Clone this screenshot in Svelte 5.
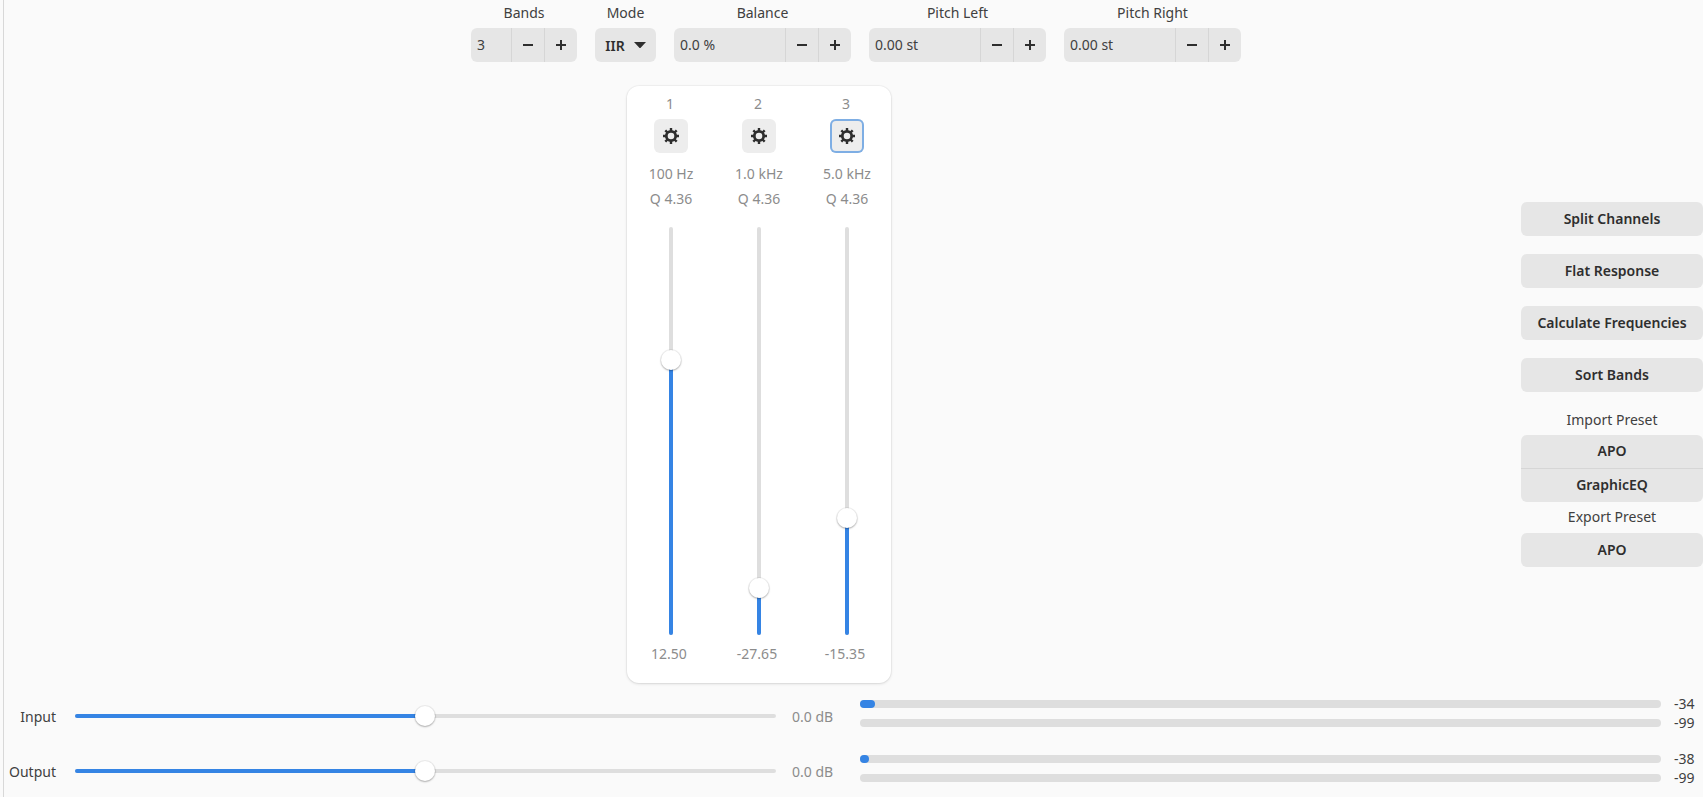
<script>
  const bands = [
    { n: '1', f: '100 Hz', q: 'Q 4.36', v: 12.5, t: '12.50' },
    { n: '2', f: '1.0 kHz', q: 'Q 4.36', v: -27.65, t: '-27.65' },
    { n: '3', f: '5.0 kHz', q: 'Q 4.36', v: -15.35, t: '-15.35', focus: true }
  ];
  const spins = [
    { label: 'Bands', value: '3', w: 40 },
    { label: 'Balance', value: '0.0 %', w: 111 },
    { label: 'Pitch Left', value: '0.00 st', w: 111 },
    { label: 'Pitch Right', value: '0.00 st', w: 111 }
  ];
  const gains = [
    { label: 'Input', levels: [{ w: 15, t: '-34' }, { w: 0, t: '-99' }] },
    { label: 'Output', levels: [{ w: 9, t: '-38' }, { w: 0, t: '-99' }] }
  ];
  const pct = (v) => ((v + 36) / 72) * 100;
</script>

{#snippet spin(s)}
  <div class="field">
    <div class="cap">{s.label}</div>
    <div class="spin">
      <div class="val" style="width:{s.w}px">{s.value}</div>
      <div class="step">
        <svg width="12" height="12" viewBox="0 0 12 12"><rect x="1" y="5" width="10" height="2" fill="#2e2e2e" /></svg>
      </div>
      <div class="step">
        <svg width="12" height="12" viewBox="0 0 12 12"><path d="M5 1h2v4h4v2H7v4H5V7H1V5h4z" fill="#2e2e2e" /></svg>
      </div>
    </div>
  </div>
{/snippet}

<div class="app">
  <div class="upper">
    <div class="center">
      <div class="controls">
        {@render spin(spins[0])}
        <div class="field">
          <div class="cap">Mode</div>
          <div class="combo">
            <span>IIR</span>
            <svg width="12" height="8" viewBox="0 0 12 8"><path d="M0 1h12L6.9 6.600a1.2 1.2 0 0 1-1.8 0z" fill="#2e2e2e" /></svg>
          </div>
        </div>
        {@render spin(spins[1])}
        {@render spin(spins[2])}
        {@render spin(spins[3])}
      </div>
      <div class="card">
        {#each bands as b}
          <div class="band">
            <div class="num">{b.n}</div>
            <div class="gear" class:focus={b.focus}>
              <svg width="18" height="18" viewBox="0 0 18 18">
                <circle cx="9" cy="9" r="4.7" fill="none" stroke="#2e2e2e" stroke-width="2.8" />
                <g stroke="#2e2e2e" stroke-width="2.4" stroke-linecap="butt">
                  <path d="M9 1v3M9 14v3M1 9h3M14 9h3M3.3 3.3l2.2 2.2M12.5 12.5l2.2 2.2M3.3 14.7l2.2-2.2M12.5 5.500l2.2-2.2" />
                </g>
              </svg>
            </div>
            <div class="dim freq">{b.f}</div>
            <div class="dim q">{b.q}</div>
            <div class="vtrack">
              <div class="vfill" style="height:{pct(b.v)}%"></div>
              <div class="thumb vthumb" style="bottom:{pct(b.v)}%"></div>
            </div>
            <div class="dim out">{b.t}</div>
          </div>
        {/each}
      </div>
    </div>
    <div class="side">
      <button class="btn">Split Channels</button>
      <button class="btn">Flat Response</button>
      <button class="btn">Calculate Frequencies</button>
      <button class="btn">Sort Bands</button>
      <div class="sidecap first">Import Preset</div>
      <div class="linked">
        <button class="btn">APO</button>
        <button class="btn">GraphicEQ</button>
      </div>
      <div class="sidecap">Export Preset</div>
      <button class="btn">APO</button>
    </div>
  </div>
  <div class="lower">
    {#each gains as g}
      <div class="gain">
        <div class="glabel">{g.label}</div>
        <div class="htrack">
          <div class="hfill"></div>
          <div class="thumb hthumb"></div>
        </div>
        <div class="dim db">0.0 dB</div>
        <div class="meters">
          {#each g.levels as l}
            <div class="meter">
              <div class="bar">
                {#if l.w}<div class="barfill" style="width:{l.w}px"></div>{/if}
              </div>
              <div class="lvl">{l.t}</div>
            </div>
          {/each}
        </div>
      </div>
    {/each}
  </div>
</div>

<style>
  :global(body) {
    margin: 0;
    background: #fafafa;
  }
  .app {
    height: 797px;
    box-sizing: border-box;
    border-left: 1px solid #d8d8d8;
    margin-left: 3px;
    width: 1700px;
    display: flex;
    flex-direction: column;
    font-family: 'Noto Sans', sans-serif;
    font-size: 14px;
    color: #2e2e2e;
    overflow: hidden;
  }
  .upper {
    flex: none;
    height: 688px;
    display: flex;
  }
  .center {
    flex: 1;
    display: flex;
    flex-direction: column;
  }
  .controls {
    display: flex;
    gap: 18px;
    padding-left: 467px;
    height: 86px;
  }
  .field {
    display: flex;
    flex-direction: column;
    align-items: center;
  }
  .cap {
    height: 28px;
    line-height: 25px;
    color: #404040;
  }
  .spin {
    display: flex;
    height: 34px;
    background: #e6e6e6;
    border-radius: 6px;
    line-height: 34px;
  }
  .val {
    padding-left: 6px;
    box-sizing: border-box;
    color: #404040;
  }
  .step {
    width: 32px;
    border-left: 1px solid #d6d6d6;
    display: flex;
    align-items: center;
    justify-content: center;
  }
  .combo {
    width: 61px;
    height: 34px;
    box-sizing: border-box;
    background: #e6e6e6;
    border-radius: 6px;
    display: flex;
    align-items: center;
    justify-content: center;
    gap: 9px;
    font-weight: 600;
  }
  .card {
    margin-left: 623px;
    width: 264px;
    height: 597px;
    box-sizing: border-box;
    background: #fff;
    border-radius: 12px;
    box-shadow: 0 0 0 1px rgba(0, 0, 0, 0.03), 0 1px 3px rgba(0, 0, 0, 0.12);
    display: flex;
  }
  .band {
    width: 88px;
    display: flex;
    flex-direction: column;
    align-items: center;
    position: relative;
  }
  .num {
    margin-top: 8px;
    margin-right: 2px;
    height: 25px;
    line-height: 20px;
    color: #8c8c8c;
  }
  .gear {
    width: 34px;
    height: 34px;
    box-sizing: border-box;
    border-radius: 6px;
    background: #ededed;
    display: flex;
    align-items: center;
    justify-content: center;
  }
  .gear.focus {
    box-shadow: inset 0 0 0 2px #7eaee4;
  }
  .dim {
    color: #8c8c8c;
  }
  .freq {
    margin-top: 11px;
    height: 25px;
    line-height: 20px;
  }
  .q {
    height: 38px;
    line-height: 20px;
  }
  .vtrack {
    position: relative;
    width: 4px;
    height: 408px;
    background: #dedede;
    border-radius: 2px;
  }
  .vfill {
    position: absolute;
    left: 0;
    right: 0;
    bottom: 0;
    background: #3584e4;
    border-radius: 2px;
  }
  .thumb {
    position: absolute;
    width: 20px;
    height: 20px;
    border-radius: 50%;
    background: #fff;
    box-shadow: 0 0 0 1px rgba(0, 0, 0, 0.05), 0 1px 2px rgba(0, 0, 0, 0.28);
  }
  .vthumb {
    left: -8px;
    margin-bottom: -10px;
  }
  .out {
    margin-top: 9px;
    margin-right: 4px;
    line-height: 20px;
  }
  .side {
    width: 182px;
    padding-top: 202px;
    display: flex;
    flex-direction: column;
  }
  .btn {
    display: block;
    width: 100%;
    height: 34px;
    margin: 0 0 18px;
    padding: 0 0 2px;
    border: 0;
    border-radius: 6px;
    background: #e6e6e6;
    color: #2e2e2e;
    font: 600 14px 'Noto Sans', sans-serif;
  }
  .sidecap {
    height: 31px;
    line-height: 30px;
    text-align: center;
    color: #404040;
  }
  .sidecap.first {
    margin-top: -6px;
    line-height: 32px;
  }
  .linked .btn {
    margin: 0;
    border-radius: 6px 6px 0 0;
    height: 33px;
  }
  .linked .btn + .btn {
    border-radius: 0 0 6px 6px;
    height: 34px;
    border-top: 1px solid #d6d6d6;
  }
  .gain {
    height: 55px;
    box-sizing: border-box;
    padding-top: 1px;
    display: flex;
    align-items: center;
  }
  .glabel {
    width: 52px;
    text-align: right;
    color: #404040;
  }
  .htrack {
    position: relative;
    width: 701px;
    height: 4px;
    margin-left: 19px;
    background: #dedede;
    border-radius: 2px;
  }
  .hfill {
    position: absolute;
    left: 0;
    top: 0;
    bottom: 0;
    width: 50%;
    background: #3584e4;
    border-radius: 2px;
  }
  .hthumb {
    left: 50%;
    top: -8px;
    margin-left: -11px;
  }
  .db {
    width: 84px;
    padding-left: 16px;
    box-sizing: border-box;
  }
  .meters {
    align-self: flex-start;
    margin-top: 11px;
    display: flex;
    flex-direction: column;
    gap: 11px;
  }
  .meter {
    display: flex;
    align-items: center;
    height: 8px;
  }
  .bar {
    width: 801px;
    height: 8px;
    border-radius: 4px;
    background: #dedede;
  }
  .barfill {
    height: 8px;
    border-radius: 4px;
    background: #3584e4;
  }
  .lvl {
    margin-left: 13px;
    line-height: 8px;
    color: #404040;
  }
</style>
